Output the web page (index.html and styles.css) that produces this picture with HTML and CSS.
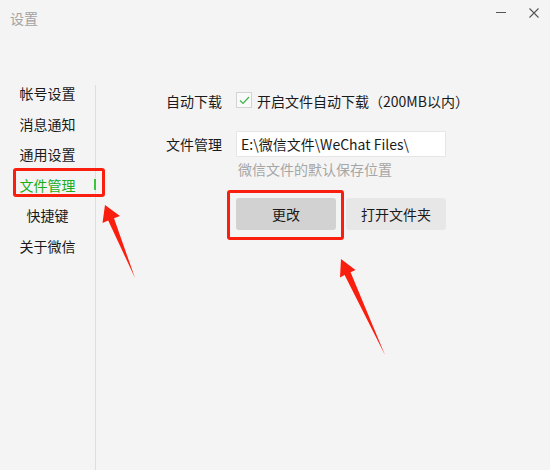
FILE: index.html
```html
<!DOCTYPE html>
<html lang="zh-CN">
  <head>
    <meta charset="UTF-8" />
    <title>设置</title>
    <link rel="stylesheet" href="styles.css">
  </head>
  <body>
    <div class="window">
      <div class="header">
        <div class="titlebar">
          <span class="title">设置</span>
          <div class="controls">
            <svg class="ctl-min" width="10" height="10" viewBox="0 0 10 10">
              <line x1="0" y1="5.5" x2="10" y2="5.5" stroke="#555" stroke-width="1" />
            </svg>
            <svg class="ctl-close" width="10" height="10" viewBox="0 0 10 10">
              <path d="M0.5 0.5 L9.5 9.5 M9.5 0.5 L0.5 9.5" stroke="#555" stroke-width="1.1" fill="none" />
            </svg>
          </div>
        </div>
      </div>

      <div class="main">
        <ul class="nav">
          <li class="nav-item">帐号设置</li>
          <li class="nav-item">消息通知</li>
          <li class="nav-item">通用设置</li>
          <li class="nav-item active">文件管理</li>
          <li class="nav-item">快捷键</li>
          <li class="nav-item">关于微信</li>
        </ul>
        <div class="divider"></div>

        <div class="content">
          <div class="row row-download">
            <span class="label">自动下载</span>
            <span class="checkbox">
              <svg width="11" height="9" viewBox="0 0 11 9">
                <path d="M1 4.5 L4 7.5 L10 1" stroke="#3cb54a" stroke-width="1.2" fill="none" />
              </svg>
            </span>
            <span class="check-text">开启文件自动下载（200MB以内）</span>
          </div>

          <div class="row row-path">
            <span class="label">文件管理</span>
            <div class="path-input">E:\微信文件\WeChat Files\</div>
          </div>
          <div class="hint">微信文件的默认保存位置</div>

          <div class="buttons">
            <button class="btn btn-change">更改</button>
            <button class="btn btn-open">打开文件夹</button>
          </div>
        </div>
      </div>

      <!-- annotations drawn over the screenshot -->
      <div class="mark mark-nav"></div>
      <div class="mark mark-btn"></div>
      <svg class="arrows" width="550" height="470" viewBox="0 0 550 470">
        <polygon points="105,205 120,216 114,218.2 135,278 108.2,220.4 102.5,223" fill="#fa1e0e" />
        <polygon points="341,259 355.5,270 350.6,272.2 385,355 344.6,275 340,277.5" fill="#fa1e0e" />
      </svg>
    </div>
  </body>
</html>
```

FILE: styles.css
```css
* {
  margin: 0;
  padding: 0;
  box-sizing: border-box;
}

body {
  font-family: "Noto Sans CJK SC", "Microsoft YaHei", sans-serif;
  background: #f4f4f4;
  color: #1a1a1a;
  width: 550px;
  height: 470px;
  overflow: hidden;
}

.window {
  position: relative;
  width: 550px;
  height: 470px;
}

.header {
  height: 78px;
}

.titlebar {
  display: flex;
  justify-content: space-between;
  align-items: flex-start;
  padding: 0 11px 0 10px;
}

.title {
  font-size: 14px;
  line-height: 20px;
  margin-top: 8px;
  color: #a3a3a3;
}

.controls {
  display: flex;
  gap: 23px;
  padding-top: 7px;
}

.ctl-close {
  margin-top: 1px;
}

.main {
  display: flex;
  height: 392px;
}

.nav {
  list-style: none;
  width: 95px;
}

.nav-item {
  position: relative;
  height: 30.6px;
  line-height: 30.6px;
  font-size: 14px;
  text-align: center;
  color: #1a1a1a;
}

.nav-item.active {
  color: #1aad19;
}

.nav-item.active::after {
  content: "";
  position: absolute;
  right: -1px;
  top: 9px;
  width: 2px;
  height: 11px;
  background: #3cc43c;
}

.divider {
  width: 1px;
  margin-top: 7px;
  background: #dedede;
}

.content {
  flex: 1;
  padding: 11px 0 0 70px;
}

.row {
  display: flex;
  align-items: center;
}

.label {
  width: 70px;
  font-size: 14px;
  line-height: 24px;
}

.row-download {
  height: 24px;
}

.checkbox {
  width: 16px;
  height: 16px;
  margin-top: -2px;
  border: 1px solid #d3d3d3;
  background: #fafafa;
  display: flex;
  align-items: center;
  justify-content: center;
}

.check-text {
  margin-left: 5px;
  font-size: 14px;
  line-height: 24px;
}

.row-path {
  margin-top: 18px;
}

.path-input {
  width: 210px;
  height: 26px;
  background: #fff;
  border: 1px solid #e6e6e6;
  padding-left: 4px;
  font-size: 14px;
  line-height: 24px;
  color: #1a1a1a;
}

.hint {
  margin: 2px 0 0 72px;
  font-size: 14px;
  line-height: 20px;
  color: #a6a6a6;
}

.buttons {
  display: flex;
  gap: 10px;
  margin: 19px 0 0 70px;
}

.btn {
  width: 100px;
  height: 32px;
  border: none;
  border-radius: 3px;
  font-family: inherit;
  font-size: 14px;
  color: #1a1a1a;
}

.btn-change {
  background: #d2d2d2;
}

.btn-open {
  background: #e7e7e7;
}

.mark {
  position: absolute;
  border: 3px solid #fa1e0e;
  border-radius: 3px;
}

.mark-nav {
  left: 13px;
  top: 168px;
  width: 92px;
  height: 29px;
}

.mark-btn {
  left: 227px;
  top: 190px;
  width: 117px;
  height: 50px;
}

.arrows {
  position: absolute;
  left: 0;
  top: 0;
}
```
